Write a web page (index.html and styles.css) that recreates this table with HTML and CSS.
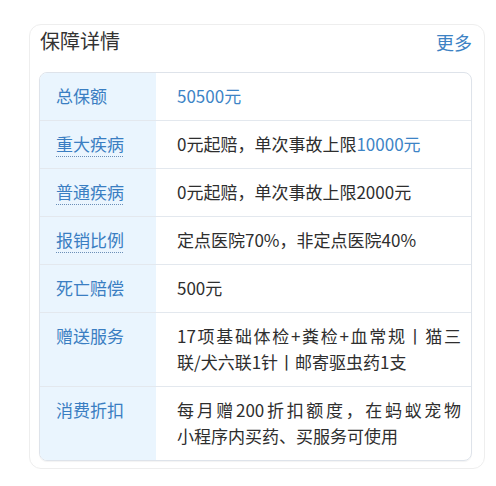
FILE: index.html
```html
<!DOCTYPE html>
<html lang="zh-CN">
<head>
<meta charset="utf-8">
<link rel="stylesheet" href="styles.css">
</head>
<body>
<section class="card">
  <header class="card-head">
    <h2 class="title">保障详情</h2>
    <a class="more">更多</a>
  </header>
  <div class="table">
    <div class="row">
      <div class="label">总保额</div>
      <div class="value"><span class="hl">50500元</span></div>
    </div>
    <div class="row">
      <div class="label"><span class="dot">重大疾病</span></div>
      <div class="value">0元起赔，单次事故上限<span class="hl">10000元</span></div>
    </div>
    <div class="row">
      <div class="label"><span class="dot">普通疾病</span></div>
      <div class="value">0元起赔，单次事故上限2000元</div>
    </div>
    <div class="row">
      <div class="label"><span class="dot">报销比例</span></div>
      <div class="value">定点医院70%，非定点医院40%</div>
    </div>
    <div class="row">
      <div class="label">死亡赔偿</div>
      <div class="value">500元</div>
    </div>
    <div class="row">
      <div class="label">赠送服务</div>
      <div class="value"><span class="line full">17项基础体检+粪检+血常规丨猫三</span><span class="line">联/犬六联1针丨邮寄驱虫药1支</span></div>
    </div>
    <div class="row">
      <div class="label">消费折扣</div>
      <div class="value"><span class="line full">每月赠200折扣额度，在蚂蚁宠物</span><span class="line">小程序内买药、买服务可使用</span></div>
    </div>
  </div>
</section>
</body>
</html>
```
FILE: styles.css
```css
* { box-sizing: border-box; }
html, body { background: #ffffff; }
body {
  margin: 0;
  padding: 24px 11px 0 29px;
  font-family: "Noto Sans CJK SC", "Noto Sans", sans-serif;
  color: #333333;
}
.card {
  width: 456px;
  border: 1px solid #eeeeee;
  border-radius: 12px;
  padding: 1px 12px 7px 9px;
}
.card-head {
  display: flex;
  justify-content: space-between;
  align-items: center;
  padding-left: 1px;
  margin-bottom: 16px;
}
.title {
  margin: 0;
  font-size: 20px;
  font-weight: 400;
  line-height: 28px;
  color: #333333;
}
.more {
  font-size: 18px;
  line-height: 28px;
  color: #3d82c4;
  padding-top: 2px;
}
.table {
  border: 1px solid #dee3ea;
  border-radius: 8px;
  overflow: hidden;
  box-shadow: 0 1px 1px rgba(0,0,0,0.05);
}
.row {
  display: grid;
  grid-template-columns: 116px 1fr;
  border-top: 1px solid #e3e8ee;
}
.row:first-child { border-top: none; }
.label {
  background: #eaf5fe;
  color: #3a7ec2;
  font-size: 17px;
  line-height: 26px;
  padding: 10px 0 11px 16px;
}
.value {
  font-size: 17px;
  line-height: 26px;
  padding: 10px 10px 11px 21px;
  color: #2e2e2e;
}
.hl { color: #3d84c6; }
.dot {
  text-decoration: underline dotted #6b8fb8;
  text-underline-offset: 5px;
  text-decoration-thickness: 1px;
}
.line { display: block; }
.line.full {
  text-align: justify;
  text-align-last: justify;
}
```
